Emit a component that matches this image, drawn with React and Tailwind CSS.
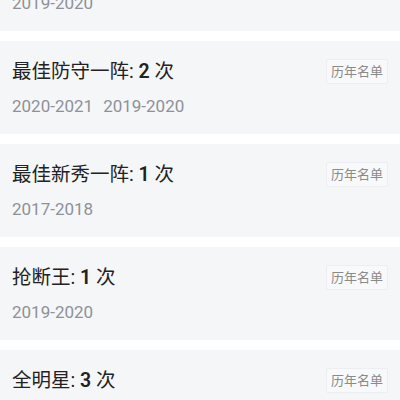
const honors = [
  { name: '最佳阵容', count: 1, years: ['2019-2020'] },
  { name: '最佳防守一阵', count: 2, years: ['2020-2021', '2019-2020'] },
  { name: '最佳新秀一阵', count: 1, years: ['2017-2018'] },
  { name: '抢断王', count: 1, years: ['2019-2020'] },
  { name: '全明星', count: 3, years: ['2020-2021', '2019-2020', '2018-2019'] },
];

function HonorCard({ honor }) {
  return (
    <div className="flex h-[93px] justify-between bg-[#f5f6f8] px-3 pt-[18px]">
      <div>
        <p className="text-[19.5px] leading-[26px] text-[#222]">
          {honor.name}: <span className="font-semibold">{honor.count}</span> 次
        </p>
        <div className="mt-[10px] flex gap-[10px] text-[17px] leading-[22px] text-[#8d9199]">
          {honor.years.map((y) => (
            <span key={y}>{y}</span>
          ))}
        </div>
      </div>
      <span className="h-[25px] rounded-[2px] border border-[#eceef1] bg-[#f8f9fa] px-1 text-[13px] leading-[23px] text-[#8a8a8a]">
        历年名单
      </span>
    </div>
  );
}

export default function App() {
  return (
    <div
      className="h-[400px] overflow-hidden bg-white"
      style={{ fontFamily: 'Roboto, "Noto Sans CJK SC", sans-serif' }}
    >
      <div className="mt-[-62px] flex flex-col gap-[10px]">
        {honors.map((h) => (
          <HonorCard key={h.name} honor={h} />
        ))}
      </div>
    </div>
  );
}
